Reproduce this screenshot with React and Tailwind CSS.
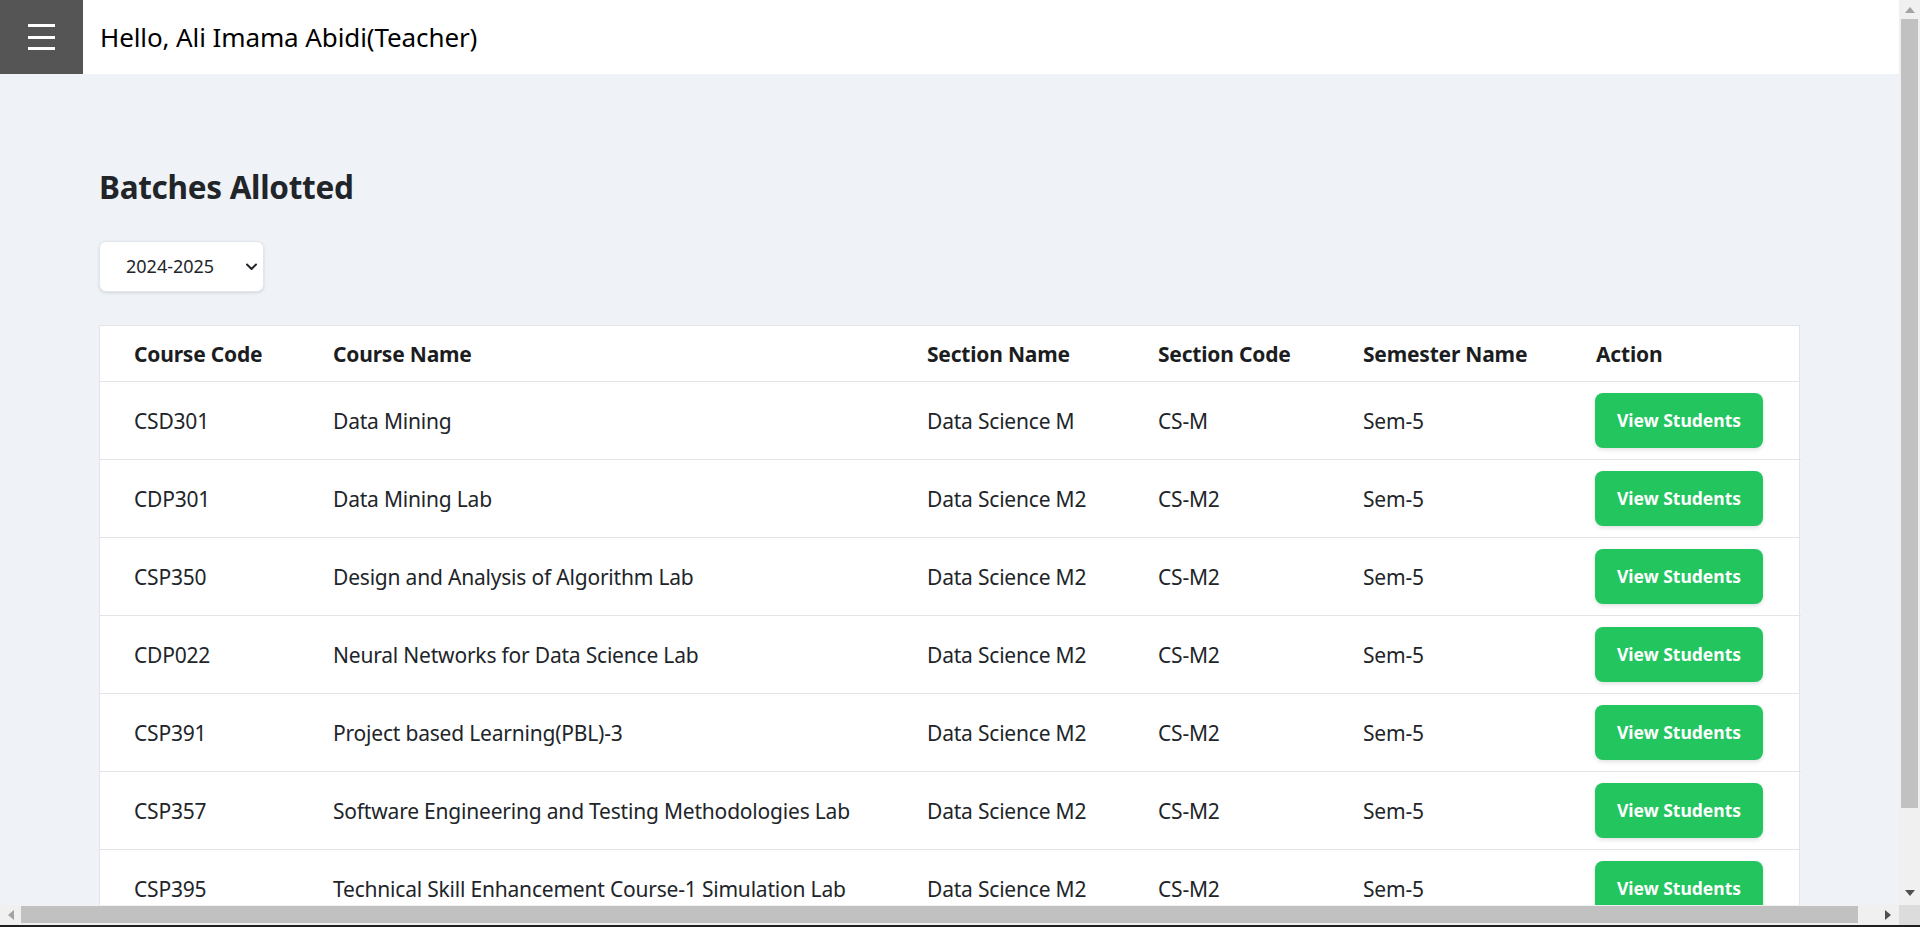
import React from "react";

const rows = [
  ["CSD301", "Data Mining", "Data Science M", "CS-M", "Sem-5"],
  ["CDP301", "Data Mining Lab", "Data Science M2", "CS-M2", "Sem-5"],
  ["CSP350", "Design and Analysis of Algorithm Lab", "Data Science M2", "CS-M2", "Sem-5"],
  ["CDP022", "Neural Networks for Data Science Lab", "Data Science M2", "CS-M2", "Sem-5"],
  ["CSP391", "Project based Learning(PBL)-3", "Data Science M2", "CS-M2", "Sem-5"],
  ["CSP357", "Software Engineering and Testing Methodologies Lab", "Data Science M2", "CS-M2", "Sem-5"],
  ["CSP395", "Technical Skill Enhancement Course-1 Simulation Lab", "Data Science M2", "CS-M2", "Sem-5"],
];

const headers = ["Course Code", "Course Name", "Section Name", "Section Code", "Semester Name", "Action"];
const widths = ["w-[233px]", "w-[594px]", "w-[231px]", "w-[205px]", "w-[233px]", "w-[205px]"];

export default function App() {
  return (
    <div
      className="w-[1920px] h-[927px] overflow-hidden flex flex-col bg-[#f0f0f0]"
      style={{ fontFamily: '"Noto Sans", "Open Sans", sans-serif' }}
    >
      <div className="flex h-[905px]">
        <div className="w-[1899px] h-full overflow-hidden bg-[#eff2f7]">
          {/* Header */}
          <div className="h-[74px] bg-white flex items-center">
            <div className="w-[83px] h-full bg-[#555555] flex flex-col justify-center pl-[28px] gap-[8.5px]">
              <div className="w-[27px] h-[3px] bg-white" />
              <div className="w-[27px] h-[3px] bg-white" />
              <div className="w-[27px] h-[3px] bg-white" />
            </div>
            <div className="ml-[17px] text-[26px] text-black leading-none tracking-[-0.1px]">
              Hello, Ali Imama Abidi(Teacher)
            </div>
          </div>

          {/* Main */}
          <div className="pl-[99px] pr-[99px]">
            <h1 className="mt-[93px] text-[31.5px] font-bold text-[#212529] leading-[40px] tracking-[-0.3px]">
              Batches Allotted
            </h1>
            <div className="mt-[34px] w-[165px] h-[51px] bg-white rounded-[7px] border border-[#e3e6ea] shadow-[0_1px_3px_rgba(0,0,0,0.12)] flex items-center pl-[26px] pr-[5px] justify-between">
              <span className="text-[18px] text-[#212529]">2024-2025</span>
              <svg width="13" height="9" viewBox="0 0 13 9" fill="none">
                <path d="M2 2.5 L6.5 7 L11 2.5" stroke="#212529" strokeWidth="2" strokeLinecap="round" strokeLinejoin="round" />
              </svg>
            </div>

            <div className="mt-[33px] bg-white border border-[#e2e4e8] w-[1701px]">
              <table className="table-fixed w-full border-collapse">
                <thead>
                  <tr className="h-[55px] border-b border-[#e2e4e8]">
                    {headers.map((h, i) => (
                      <th
                        key={h}
                        className={`${widths[i]} text-left font-bold text-[21px] text-[#1b1d21] ${i === 0 ? "pl-[34px]" : "pl-0"} pt-[2px] tracking-[-0.2px]`}
                      >
                        {h}
                      </th>
                    ))}
                  </tr>
                </thead>
                <tbody>
                  {rows.map((r) => (
                    <tr key={r[0]} className="h-[78px] border-b border-[#e2e4e8]">
                      {r.map((c, i) => (
                        <td
                          key={i}
                          className={`text-[21px] text-[#212529] ${i === 0 ? "pl-[34px]" : "pl-0"} pt-[4px] tracking-[-0.2px] whitespace-nowrap`}
                        >
                          {c}
                        </td>
                      ))}
                      <td>
                        <button className="w-[168px] h-[55px] -ml-[1px] rounded-[8px] bg-[#22c55e] text-white font-bold text-[17.5px] shadow-[0_2px_4px_rgba(0,0,0,0.12)]">
                          View Students
                        </button>
                      </td>
                    </tr>
                  ))}
                </tbody>
              </table>
            </div>
          </div>
        </div>

        {/* Vertical scrollbar */}
        <div className="w-[21px] h-full bg-[#f0f0f0] flex flex-col items-center">
          <div className="h-[19px] flex items-center justify-center">
            <svg width="10" height="6" viewBox="0 0 10 6"><path d="M0 6 L5 0 L10 6 Z" fill="#a3a3a3" /></svg>
          </div>
          <div className="w-[17px] h-[789px] bg-[#c1c1c1]" />
          <div className="flex-1 flex items-end justify-center pb-[9px]">
            <svg width="10" height="6" viewBox="0 0 10 6"><path d="M0 0 L5 6 L10 0 Z" fill="#505050" /></svg>
          </div>
        </div>
      </div>

      {/* Horizontal scrollbar */}
      <div className="h-[20px] flex bg-[#f0f0f0]">
        <div className="w-[21px] h-full flex items-center justify-center">
          <svg width="6" height="10" viewBox="0 0 6 10"><path d="M6 0 L0 5 L6 10 Z" fill="#a3a3a3" /></svg>
        </div>
        <div className="w-[1837px] h-[17px] mt-[1px] bg-[#c1c1c1]" />
        <div className="w-[41px] h-full flex items-center justify-end pr-[8px]">
          <svg width="6" height="10" viewBox="0 0 6 10"><path d="M0 0 L6 5 L0 10 Z" fill="#505050" /></svg>
        </div>
        <div className="w-[21px] h-full bg-[#dcdcdc]" />
      </div>
      <div className="h-[2px] bg-[#1f1f1f]" />
    </div>
  );
}
